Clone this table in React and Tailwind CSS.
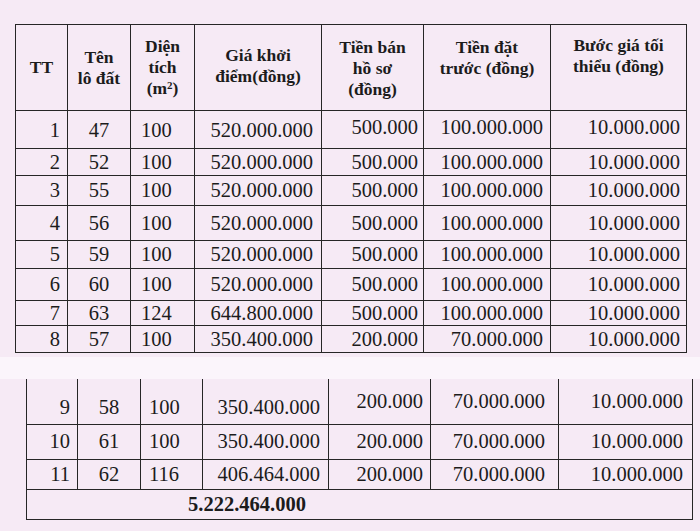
import React from "react";

const serif = { fontFamily: '"Liberation Serif", "Times New Roman", serif' };

const topRows = [
  { h: 38, v: ["1", "47", "100", "520.000.000", "500.000", "100.000.000", "10.000.000"], low: true },
  { h: 27, v: ["2", "52", "100", "520.000.000", "500.000", "100.000.000", "10.000.000"] },
  { h: 30, v: ["3", "55", "100", "520.000.000", "500.000", "100.000.000", "10.000.000"] },
  { h: 35, v: ["4", "56", "100", "520.000.000", "500.000", "100.000.000", "10.000.000"] },
  { h: 28, v: ["5", "59", "100", "520.000.000", "500.000", "100.000.000", "10.000.000"] },
  { h: 32, v: ["6", "60", "100", "520.000.000", "500.000", "100.000.000", "10.000.000"] },
  { h: 25, v: ["7", "63", "124", "644.800.000", "500.000", "100.000.000", "10.000.000"] },
  { h: 27, v: ["8", "57", "100", "350.400.000", "200.000", "70.000.000", "10.000.000"] },
];

const bottomRows = [
  { h: 45, v: ["9", "58", "100", "350.400.000", "200.000", "70.000.000", "10.000.000"], first: true },
  { h: 35, v: ["10", "61", "100", "350.400.000", "200.000", "70.000.000", "10.000.000"] },
  { h: 30, v: ["11", "62", "116", "406.464.000", "200.000", "70.000.000", "10.000.000"] },
];

const topAlign = [
  "text-right pr-[7px]",
  "text-center",
  "text-left pl-[10px]",
  "text-right pr-[8px]",
  "text-right pr-[5px]",
  "text-right pr-[7px]",
  "text-right pr-[6px]",
];

const bottomAlign = [
  "text-right pr-[7px]",
  "text-center",
  "text-left pl-[8px]",
  "text-right pr-[8px]",
  "text-right pr-[7px]",
  "text-right pr-[13px]",
  "text-right pr-[9px]",
];

const cell = "border-[1.5px] border-[#262626] p-0";
const hcell = `${cell} leading-[21px] text-center`;

export default function App() {
  return (
    <div
      className="w-[700px] h-[531px] bg-[#f6eaf5] text-[#1c1c1c] flex flex-col overflow-hidden"
      style={serif}
    >
      <div className="pt-[24px] pl-[15px]">
        <table className="table-fixed border-collapse w-[671px]">
          <colgroup>
            <col className="w-[52px]" />
            <col className="w-[63px]" />
            <col className="w-[64px]" />
            <col className="w-[127px]" />
            <col className="w-[102px]" />
            <col className="w-[127px]" />
            <col className="w-[136px]" />
          </colgroup>
          <thead>
            <tr className="h-[86px] font-bold text-[17.5px]">
              <th className={`${hcell} align-middle`}>TT</th>
              <th className={`${hcell} align-middle`}>
                Tên
                <br />
                lô đất
              </th>
              <th className={`${hcell} align-middle`}>
                Diện
                <br />
                tích
                <br />
                (m<sup className="text-[11px]">2</sup>)
              </th>
              <th className={`${hcell} align-middle pb-[4px]`}>
                Giá khởi
                <br />
                điểm(đồng)
              </th>
              <th className={`${hcell} align-top pt-[12px]`}>
                Tiền bán
                <br />
                hồ sơ
                <br />
                (đồng)
              </th>
              <th className={`${hcell} align-top pt-[12px]`}>
                Tiền đặt
                <br />
                trước (đồng)
              </th>
              <th className={`${hcell} align-top pt-[10px]`}>
                Bước giá tối
                <br />
                thiểu (đồng)
              </th>
            </tr>
          </thead>
          <tbody className="text-[20.5px] leading-none">
            {topRows.map((r, i) => (
              <tr key={i} style={{ height: r.h }}>
                {r.v.map((t, j) => (
                  <td
                    key={j}
                    className={`${cell} ${topAlign[j]} ${
                      r.low ? (j < 4 ? "align-bottom pb-[8px]" : "align-top pt-[6px]") : "align-middle"
                    }`}
                  >
                    {t}
                  </td>
                ))}
              </tr>
            ))}
          </tbody>
        </table>
      </div>

      <div className="h-[22px] mt-[4px] bg-[#fbf5fb]" />

      <div className="pl-[26px]">
        <table className="table-fixed border-collapse w-[666px] text-[20.5px] leading-none">
          <colgroup>
            <col className="w-[51px]" />
            <col className="w-[63px]" />
            <col className="w-[62px]" />
            <col className="w-[126px]" />
            <col className="w-[102px]" />
            <col className="w-[128px]" />
            <col className="w-[134px]" />
          </colgroup>
          <tbody>
            {bottomRows.map((r, i) => (
              <tr key={i} style={{ height: r.h }}>
                {r.v.map((t, j) => (
                  <td
                    key={j}
                    className={`${cell} ${r.first ? "border-t-0" : ""} ${bottomAlign[j]} ${
                      r.first
                        ? j < 4
                          ? "align-bottom pb-[6px]"
                          : "align-bottom pb-[12px]"
                        : "align-middle"
                    }`}
                  >
                    {t}
                  </td>
                ))}
              </tr>
            ))}
            <tr className="h-[30px]">
              <td colSpan={7} className={`${cell} font-bold text-left pl-[161px] align-middle`}>
                5.222.464.000
              </td>
            </tr>
          </tbody>
        </table>
      </div>
    </div>
  );
}
